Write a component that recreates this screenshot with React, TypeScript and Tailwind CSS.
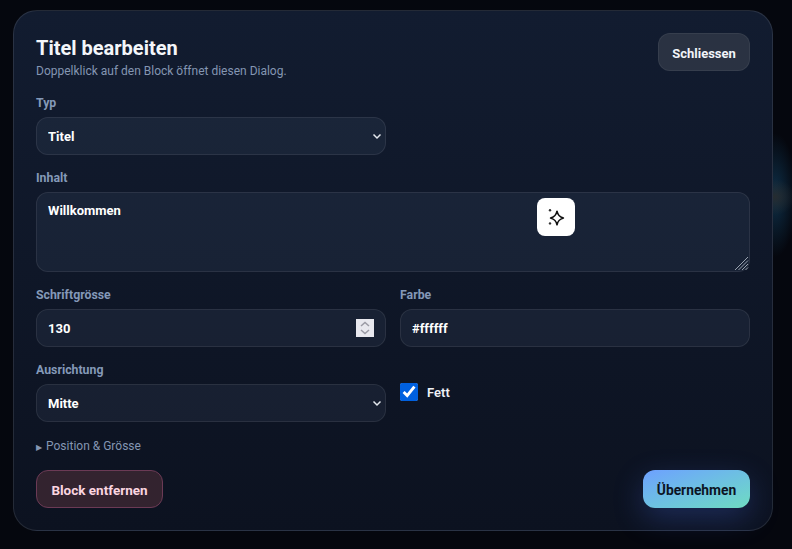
const fieldCls =
  'h-[38px] w-full appearance-none rounded-[12px] border border-white/[0.08] bg-[#9cb8e0]/[0.07] px-[11px] text-[13px] font-bold text-white outline-none';

function Label({ children }: { children: React.ReactNode }) {
  return <label className="mb-[6px] block h-[17px] text-[12.3px] leading-[19px] font-bold text-[#8499b8]">{children}</label>;
}

function SparkleIcon() {
  return (
    <svg width="20" height="20" viewBox="0 0 20 20" fill="none">
      <path d="M11 4.2 C11.9 8.2 13.2 9.6 17.4 11 C13.2 12.4 11.9 13.8 11 17.8 C10.1 13.8 8.8 12.4 4.6 11 C8.8 9.6 10.1 8.2 11 4.2 Z" stroke="#111" strokeWidth="1.6" strokeLinejoin="round" />
      <circle cx="4" cy="3.2" r="1.2" fill="#333" />
      <circle cx="4" cy="16.4" r="1.2" fill="#333" />
    </svg>
  );
}

function SelectField({ value }: { value: string }) {
  return (
    <div className="relative">
      <select className={`${fieldCls} pt-[2px]`} defaultValue={value}>
        <option>{value}</option>
      </select>
      <svg className="pointer-events-none absolute top-[16px] right-[4px]" width="10" height="7" viewBox="0 0 10 7" fill="none" stroke="#e4e8ee" strokeWidth="1.5">
        <path d="M1.5 1.5 L5 5 L8.5 1.5" />
      </svg>
    </div>
  );
}

export default function App() {
  return (
    <div className="h-[549px] w-[792px] overflow-hidden bg-[radial-gradient(ellipse_20px_18px_at_775px_197px,#262c30,transparent),radial-gradient(ellipse_22px_62px_at_775px_195px,#0e2f48,transparent)] bg-[#05070e] pt-[10px] pl-[13px] font-['Roboto',sans-serif]">
      <div className="h-[521px] w-[760px] rounded-[24px] border border-white/10 bg-gradient-to-b from-[#121c30] to-[#0c1220] p-[22px]">
        <div className="mb-[14px] flex items-start justify-between">
          <div>
            <h2 className="text-[20px] leading-[30px] font-bold text-[#f4f6fa]">Titel bearbeiten</h2>
            <p className="text-[12px] leading-[17px] text-[#8496b2]">Doppelklick auf den Block öffnet diesen Dialog.</p>
          </div>
          <button className="h-[38px] w-[92px] rounded-[12px] border border-white/[0.06] bg-[#2a3242] pt-[3px] text-[13px] font-bold text-[#f1f4f9]">
            Schliessen
          </button>
        </div>

        <div className="grid grid-cols-2 gap-x-[14px] gap-y-[14px]">
          <div>
            <Label>Typ</Label>
            <SelectField value="Titel" />
          </div>
          <div />

          <div className="col-span-2">
            <Label>Inhalt</Label>
            <div className="relative">
              <textarea
                className={`${fieldCls} block h-[80px] resize-none pt-[8px] pb-[9px]`}
                defaultValue="Willkommen"
              />
              <button className="absolute top-[6px] left-[501px] flex h-[38px] w-[38px] items-center justify-center rounded-[8px] bg-white">
                <SparkleIcon />
              </button>
              <svg className="pointer-events-none absolute right-[1px] bottom-[1px]" width="15" height="15" viewBox="0 0 15 15" fill="none" stroke="#9aa3b0" strokeWidth="1">
                <path d="M1 14 L14 1 M4.5 14 L14 4.5 M8 14 L14 8 M11.5 14 L14 11.5" />
              </svg>
            </div>
          </div>

          <div>
            <Label>Schriftgrösse</Label>
            <div className="relative">
              <input className={fieldCls} defaultValue="130" />
              <div className="absolute top-[10px] right-[12px] flex h-[18px] w-[18px] flex-col items-center justify-center bg-[#e8e8ee]">
                <svg width="12" height="14" viewBox="0 0 12 14" fill="none" stroke="#9a9aa4" strokeWidth="1.5">
                  <path d="M2 5 L6 1.5 L10 5" />
                  <path d="M2 9 L6 12.5 L10 9" />
                </svg>
              </div>
            </div>
          </div>
          <div>
            <Label>Farbe</Label>
            <input className={fieldCls} defaultValue="#ffffff" />
          </div>

          <div>
            <Label>Ausrichtung</Label>
            <SelectField value="Mitte" />
          </div>
          <label className="flex items-center gap-[9px] pt-[1px] text-[13px] font-semibold text-[#eef1f6]">
            <input type="checkbox" defaultChecked className="h-[18px] w-[18px] accent-[#0060df]" />
            <span className="mt-[2px]">Fett</span>
          </label>
        </div>

        <div className="mt-[14px] h-[20px] text-[12px] leading-[20px] text-[#8496b2]">
          <span className="mr-[4px] text-[8px]">▶</span>Position &amp; Grösse
        </div>

        <div className="mt-[14px] flex items-center justify-between">
          <button className="h-[38px] w-[127px] rounded-[12px] border border-[#6b3a55] bg-[#33232f] pt-[3px] text-[13.5px] font-bold text-[#fbd5e0]">
            Block entfernen
          </button>
          <button className="h-[38px] w-[107px] rounded-[12px] bg-gradient-to-br from-[#6ea0ff] to-[#6fdcc0] pt-[3px] text-[13.8px] font-bold text-[#0c1424] shadow-[0_10px_30px_rgba(80,120,255,0.25)]">
            Übernehmen
          </button>
        </div>
      </div>
    </div>
  );
}
